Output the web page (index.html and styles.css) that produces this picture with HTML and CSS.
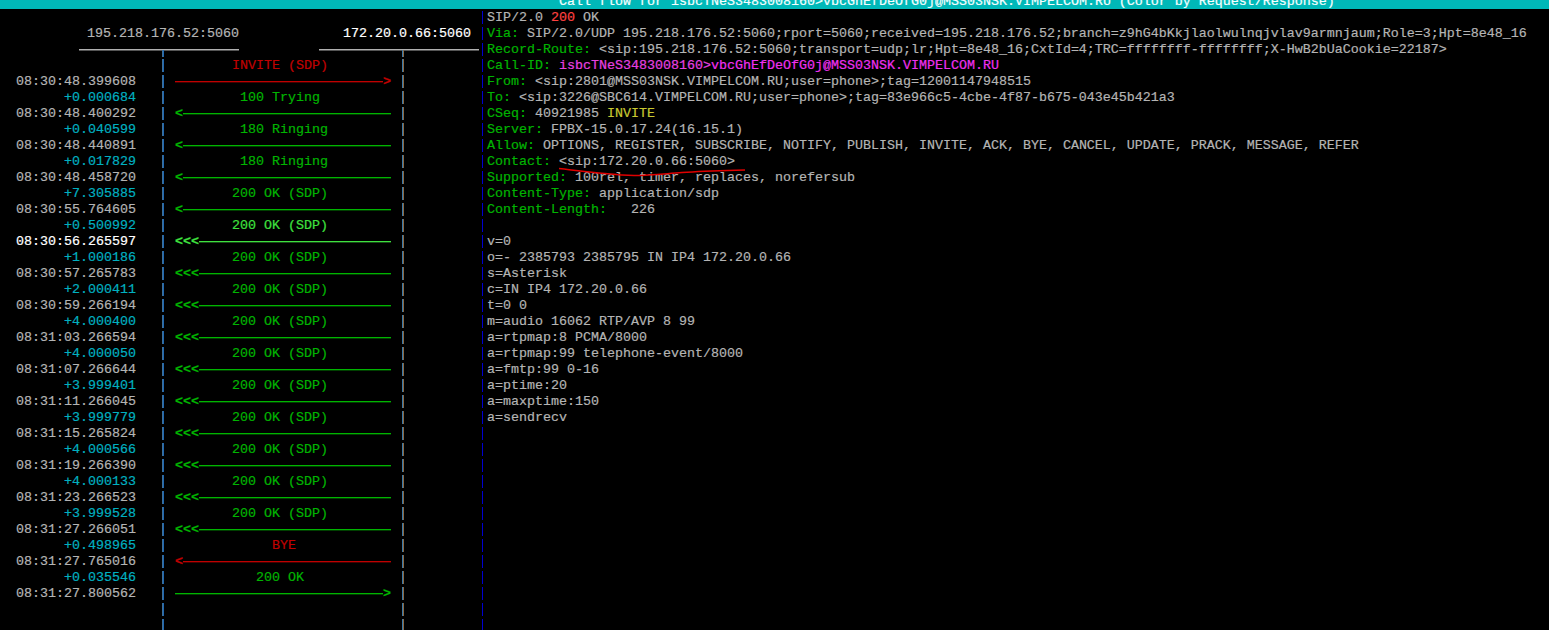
FILE: index.html
```html
<!DOCTYPE html>
<html lang="en">
<head>
<meta charset="utf-8">
<title>Call flow</title>
<link rel="stylesheet" href="styles.css">
</head>
<body>
<header class="title"><span class="title-text">Call flow for isbcTNeS3483008160&gt;vbcGhEfDeOfG0j@MSS03NSK.VIMPELCOM.RU (Color by Request/Response)</span></header>
<main class="screen">
  <section class="flow">
    <div class="row"></div>
    <div class="row hosts"><span class="host">195.218.176.52:5060</span><span class="host host-b">172.20.0.66:5060</span></div>
    <div class="row rules"><div class="rule"><i class="bar bar-a tee"></i></div><div class="rule rule-b"><i class="bar bar-b tee"></i></div></div>

    <div class="row"><span class="time"></span><i class="bar bar-a"></i><span class="mid red">        INVITE (SDP)</span><i class="bar bar-b"></i></div>
    <div class="row"><span class="time">08:30:48.399608</span><i class="bar bar-a"></i><span class="mid"><span class="arrow red"><span class="shaft"></span><span class="head">&gt;</span></span></span><i class="bar bar-b"></i></div>
    <div class="row"><span class="time delta">+0.000684</span><i class="bar bar-a"></i><span class="mid green">         100 Trying</span><i class="bar bar-b"></i></div>
    <div class="row"><span class="time">08:30:48.400292</span><i class="bar bar-a"></i><span class="mid"><span class="arrow green"><span class="head">&lt;</span><span class="shaft"></span></span></span><i class="bar bar-b"></i></div>
    <div class="row"><span class="time delta">+0.040599</span><i class="bar bar-a"></i><span class="mid green">         180 Ringing</span><i class="bar bar-b"></i></div>
    <div class="row"><span class="time">08:30:48.440891</span><i class="bar bar-a"></i><span class="mid"><span class="arrow green"><span class="head">&lt;</span><span class="shaft"></span></span></span><i class="bar bar-b"></i></div>
    <div class="row"><span class="time delta">+0.017829</span><i class="bar bar-a"></i><span class="mid green">         180 Ringing</span><i class="bar bar-b"></i></div>
    <div class="row"><span class="time">08:30:48.458720</span><i class="bar bar-a"></i><span class="mid"><span class="arrow green"><span class="head">&lt;</span><span class="shaft"></span></span></span><i class="bar bar-b"></i></div>
    <div class="row"><span class="time delta">+7.305885</span><i class="bar bar-a"></i><span class="mid green">        200 OK (SDP)</span><i class="bar bar-b"></i></div>
    <div class="row"><span class="time">08:30:55.764605</span><i class="bar bar-a"></i><span class="mid"><span class="arrow green"><span class="head">&lt;</span><span class="shaft"></span></span></span><i class="bar bar-b"></i></div>
    <div class="row"><span class="time delta">+0.500992</span><i class="bar bar-a"></i><span class="mid bright">        200 OK (SDP)</span><i class="bar bar-b"></i></div>
    <div class="row"><span class="time now">08:30:56.265597</span><i class="bar bar-a"></i><span class="mid"><span class="arrow bright"><span class="head">&lt;&lt;&lt;</span><span class="shaft"></span></span></span><i class="bar bar-b"></i></div>
    <div class="row"><span class="time delta">+1.000186</span><i class="bar bar-a"></i><span class="mid green">        200 OK (SDP)</span><i class="bar bar-b"></i></div>
    <div class="row"><span class="time">08:30:57.265783</span><i class="bar bar-a"></i><span class="mid"><span class="arrow green"><span class="head">&lt;&lt;&lt;</span><span class="shaft"></span></span></span><i class="bar bar-b"></i></div>
    <div class="row"><span class="time delta">+2.000411</span><i class="bar bar-a"></i><span class="mid green">        200 OK (SDP)</span><i class="bar bar-b"></i></div>
    <div class="row"><span class="time">08:30:59.266194</span><i class="bar bar-a"></i><span class="mid"><span class="arrow green"><span class="head">&lt;&lt;&lt;</span><span class="shaft"></span></span></span><i class="bar bar-b"></i></div>
    <div class="row"><span class="time delta">+4.000400</span><i class="bar bar-a"></i><span class="mid green">        200 OK (SDP)</span><i class="bar bar-b"></i></div>
    <div class="row"><span class="time">08:31:03.266594</span><i class="bar bar-a"></i><span class="mid"><span class="arrow green"><span class="head">&lt;&lt;&lt;</span><span class="shaft"></span></span></span><i class="bar bar-b"></i></div>
    <div class="row"><span class="time delta">+4.000050</span><i class="bar bar-a"></i><span class="mid green">        200 OK (SDP)</span><i class="bar bar-b"></i></div>
    <div class="row"><span class="time">08:31:07.266644</span><i class="bar bar-a"></i><span class="mid"><span class="arrow green"><span class="head">&lt;&lt;&lt;</span><span class="shaft"></span></span></span><i class="bar bar-b"></i></div>
    <div class="row"><span class="time delta">+3.999401</span><i class="bar bar-a"></i><span class="mid green">        200 OK (SDP)</span><i class="bar bar-b"></i></div>
    <div class="row"><span class="time">08:31:11.266045</span><i class="bar bar-a"></i><span class="mid"><span class="arrow green"><span class="head">&lt;&lt;&lt;</span><span class="shaft"></span></span></span><i class="bar bar-b"></i></div>
    <div class="row"><span class="time delta">+3.999779</span><i class="bar bar-a"></i><span class="mid green">        200 OK (SDP)</span><i class="bar bar-b"></i></div>
    <div class="row"><span class="time">08:31:15.265824</span><i class="bar bar-a"></i><span class="mid"><span class="arrow green"><span class="head">&lt;&lt;&lt;</span><span class="shaft"></span></span></span><i class="bar bar-b"></i></div>
    <div class="row"><span class="time delta">+4.000566</span><i class="bar bar-a"></i><span class="mid green">        200 OK (SDP)</span><i class="bar bar-b"></i></div>
    <div class="row"><span class="time">08:31:19.266390</span><i class="bar bar-a"></i><span class="mid"><span class="arrow green"><span class="head">&lt;&lt;&lt;</span><span class="shaft"></span></span></span><i class="bar bar-b"></i></div>
    <div class="row"><span class="time delta">+4.000133</span><i class="bar bar-a"></i><span class="mid green">        200 OK (SDP)</span><i class="bar bar-b"></i></div>
    <div class="row"><span class="time">08:31:23.266523</span><i class="bar bar-a"></i><span class="mid"><span class="arrow green"><span class="head">&lt;&lt;&lt;</span><span class="shaft"></span></span></span><i class="bar bar-b"></i></div>
    <div class="row"><span class="time delta">+3.999528</span><i class="bar bar-a"></i><span class="mid green">        200 OK (SDP)</span><i class="bar bar-b"></i></div>
    <div class="row"><span class="time">08:31:27.266051</span><i class="bar bar-a"></i><span class="mid"><span class="arrow green"><span class="head">&lt;&lt;&lt;</span><span class="shaft"></span></span></span><i class="bar bar-b"></i></div>
    <div class="row"><span class="time delta">+0.498965</span><i class="bar bar-a"></i><span class="mid red">             BYE</span><i class="bar bar-b"></i></div>
    <div class="row"><span class="time">08:31:27.765016</span><i class="bar bar-a"></i><span class="mid"><span class="arrow red"><span class="head">&lt;</span><span class="shaft"></span></span></span><i class="bar bar-b"></i></div>
    <div class="row"><span class="time delta">+0.035546</span><i class="bar bar-a"></i><span class="mid green">           200 OK</span><i class="bar bar-b"></i></div>
    <div class="row"><span class="time">08:31:27.800562</span><i class="bar bar-a"></i><span class="mid"><span class="arrow green"><span class="shaft"></span><span class="head">&gt;</span></span></span><i class="bar bar-b"></i></div>
    <div class="row"><span class="time"></span><i class="bar bar-a"></i><span class="mid"></span><i class="bar bar-b"></i></div>
    <div class="row"><span class="time"></span><i class="bar bar-a"></i><span class="mid"></span><i class="bar bar-b"></i></div>
  </section>

  <section class="message">
    <div class="line"><span>SIP/2.0 <b class="status">200</b> OK</span></div>
    <div class="line"><span><b class="key">Via:</b> SIP/2.0/UDP 195.218.176.52:5060;rport=5060;received=195.218.176.52;branch=z9hG4bKkjlaolwulnqjvlav9armnjaum;Role=3;Hpt=8e48_16</span></div>
    <div class="line"><span><b class="key">Record-Route:</b> &lt;sip:195.218.176.52:5060;transport=udp;lr;Hpt=8e48_16;CxtId=4;TRC=ffffffff-ffffffff;X-HwB2bUaCookie=22187&gt;</span></div>
    <div class="line"><span><b class="key">Call-ID:</b> <b class="callid">isbcTNeS3483008160&gt;</b><b class="callid-b">vbcGhEfDeOfG0j@MSS03NSK.VIMPELCOM.RU</b></span></div>
    <div class="line"><span><b class="key">From:</b> &lt;sip:2801@MSS03NSK.VIMPELCOM.RU;user=phone&gt;;tag=12001147948515</span></div>
    <div class="line"><span><b class="key">To:</b> &lt;sip:3226@SBC614.VIMPELCOM.RU;user=phone&gt;;tag=83e966c5-4cbe-4f87-b675-043e45b421a3</span></div>
    <div class="line"><span><b class="key">CSeq:</b> 40921985 <b class="method">INVITE</b></span></div>
    <div class="line"><span><b class="key">Server:</b> FPBX-15.0.17.24(16.15.1)</span></div>
    <div class="line"><span><b class="key">Allow:</b> OPTIONS, REGISTER, SUBSCRIBE, NOTIFY, PUBLISH, INVITE, ACK, BYE, CANCEL, UPDATE, PRACK, MESSAGE, REFER</span></div>
    <div class="line"><span><b class="key">Contact:</b> &lt;sip:172.20.0.66:5060&gt;</span></div>
    <div class="line"><span><b class="key">Supported:</b> 100rel, timer, replaces, norefersub</span></div>
    <div class="line"><span><b class="key">Content-Type:</b> application/sdp</span></div>
    <div class="line"><span><b class="key">Content-Length:</b>   226</span></div>
    <div class="line"></div>
    <div class="line"><span>v=0</span></div>
    <div class="line"><span>o=- 2385793 2385795 IN IP4 172.20.0.66</span></div>
    <div class="line"><span>s=Asterisk</span></div>
    <div class="line"><span>c=IN IP4 172.20.0.66</span></div>
    <div class="line"><span>t=0 0</span></div>
    <div class="line"><span>m=audio 16062 RTP/AVP 8 99</span></div>
    <div class="line"><span>a=rtpmap:8 PCMA/8000</span></div>
    <div class="line"><span>a=rtpmap:99 telephone-event/8000</span></div>
    <div class="line"><span>a=fmtp:99 0-16</span></div>
    <div class="line"><span>a=ptime:20</span></div>
    <div class="line"><span>a=maxptime:150</span></div>
    <div class="line"><span>a=sendrecv</span></div>
    <div class="line"></div><div class="line"></div><div class="line"></div><div class="line"></div>
    <div class="line"></div><div class="line"></div><div class="line"></div><div class="line"></div>
    <div class="line"></div><div class="line"></div><div class="line"></div><div class="line"></div>
    <div class="line"></div>
  </section>
</main>
<svg class="scribble" width="200" height="16" viewBox="0 0 200 16" aria-hidden="true"><path d="M1 2.5 C14 4 24 5.5 36 6.5 C52 8 62 9.5 76 9.5 C92 9.5 104 8 124 6.5 C146 5 166 4.6 187 4"/></svg>
</body>
</html>
```

FILE: styles.css
```css
html, body {
  margin: 0;
  height: 630px;
  overflow: hidden;
  background: #000;
}
body {
  position: relative;
  font-family: "Liberation Mono", "Courier New", monospace;
  font-size: 13.33px;
  line-height: 18px;
  color: #b4b4b4;
  -webkit-text-stroke: 0.2px;
}
.title {
  height: 9px;
  background: #00b8b8;
  color: #f4ffff;
  display: flex;
  align-items: flex-end;
  overflow: hidden;
  padding-left: 559px;
}
.title-text { display: block; height: 16px; flex: none; white-space: pre; }
.screen { display: flex; }
.flow { width: 482px; flex: none; }
.row { display: flex; height: 16px; }
.host { margin-left: 87px; width: 232px; white-space: pre; }
.host-b { margin-left: 24px; width: auto; color: #fff; }
.rule {
  width: 160px;
  height: 7px;
  margin: 8px 0 0 79px;
  border-top: 1px solid #b0b0b0;
  background: linear-gradient(#555 1px, transparent 1px);
}
.rule-b { margin-left: 80px; }
.time { width: 136px; margin-right: 26px; text-align: right; flex: none; }
.delta { color: #00b0c0; }
.now { color: #fff; }
.bar {
  display: block;
  flex: none;
  width: 2px;
  height: 13px;
  margin-top: 2px;
}
.bar-a { background: linear-gradient(90deg, #3f6f98 50%, #2068b0 50%); }
.bar-b { background: linear-gradient(90deg, #3a78a8 50%, #8a6a44 50%); }
.tee { height: 7px; margin: 0 0 0 83px; }
.mid { width: 234px; padding-left: 4px; flex: none; display: block; white-space: pre; }
.red { color: #c00000; }
.green { color: #00b400; }
.bright { color: #3fe03f; }
.arrow {
  display: flex;
  align-items: center;
  width: 216px;
  margin-left: 7px;
  height: 16px;
}
.head { flex: none; font-weight: bold; margin-top: 2px; }
.shaft {
  flex: 1;
  height: 1px;
  margin-top: 1px;
  background: currentColor;
  border-bottom: 1px solid color-mix(in srgb, currentColor 35%, black);
}
.message { flex: 1; min-width: 0; }
.line {
  display: flex;
  height: 16px;
  overflow: hidden;
  white-space: pre;
}
.line::before {
  content: "";
  flex: none;
  width: 1px;
  height: 13px;
  margin: 2px 4px 0 0;
  background: #0000d0;
}
.line b { font-weight: normal; }
.key { color: #00b400; }
.status { color: #ff4040; }
.callid { color: #e840e0; }
.callid-b { color: #f030f0; }
.method { color: #c8c830; }
.scribble {
  position: absolute;
  left: 558px;
  top: 166px;
}
.scribble path {
  fill: none;
  stroke: #e00000;
  stroke-width: 1.6;
}
```
